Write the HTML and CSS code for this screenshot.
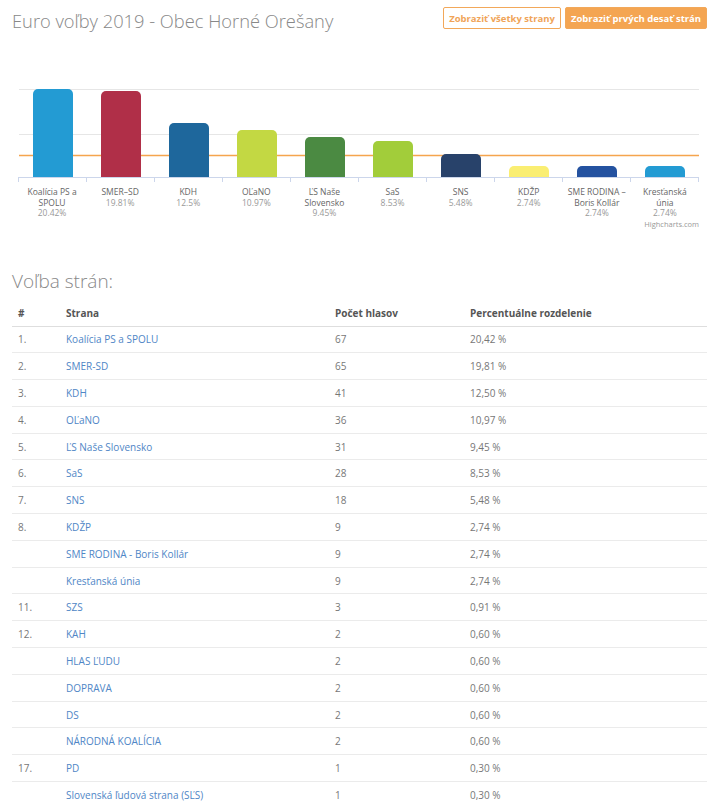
FILE: index.html
```html
<!DOCTYPE html>
<html lang="sk">
<head>
<meta charset="utf-8">
<title>Euro voľby 2019 - Obec Horné Orešany</title>
<link rel="stylesheet" href="styles.css">
</head>
<body>
<div class="page">
  <header class="top">
    <h1 class="title">Euro voľby 2019 - Obec Horné Orešany</h1>
    <div class="actions">
      <button class="btn btn-outline">Zobraziť všetky strany</button>
      <button class="btn btn-fill">Zobraziť prvých desať strán</button>
    </div>
  </header>

  <section class="chart">
    <svg class="plot" width="720" height="104" viewBox="0 80 720 104">
      <g class="grid">
        <line x1="19" y1="89.5" x2="699" y2="89.5"/>
        <line x1="19" y1="134.5" x2="699" y2="134.5"/>
      </g>
      <line class="threshold" x1="19" y1="155.5" x2="699" y2="155.5"/>
      <g class="bars">
        <path fill="#239bd3" d="M33 177V94a5 5 0 0 1 5-5h30a5 5 0 0 1 5 5v83z"/>
        <path fill="#b02f48" d="M101 177V96a5 5 0 0 1 5-5h30a5 5 0 0 1 5 5v81z"/>
        <path fill="#1e679c" d="M169 177V128a5 5 0 0 1 5-5h30a5 5 0 0 1 5 5v49z"/>
        <path fill="#c3d843" d="M237 177V135a5 5 0 0 1 5-5h30a5 5 0 0 1 5 5v42z"/>
        <path fill="#4b8a42" d="M305 177V142a5 5 0 0 1 5-5h30a5 5 0 0 1 5 5v35z"/>
        <path fill="#a2cd3a" d="M373 177V146a5 5 0 0 1 5-5h30a5 5 0 0 1 5 5v31z"/>
        <path fill="#28426a" d="M441 177V159a5 5 0 0 1 5-5h30a5 5 0 0 1 5 5v18z"/>
        <path fill="#faee72" d="M509 177V171a5 5 0 0 1 5-5h30a5 5 0 0 1 5 5v6z"/>
        <path fill="#2452a0" d="M577 177V171a5 5 0 0 1 5-5h30a5 5 0 0 1 5 5v6z"/>
        <path fill="#239bd3" d="M645 177V171a5 5 0 0 1 5-5h30a5 5 0 0 1 5 5v6z"/>
      </g>
      <g class="axis">
        <line x1="18" y1="177.5" x2="699" y2="177.5"/>
        <line x1="18.5" y1="177" x2="18.5" y2="182"/>
        <line x1="86.5" y1="177" x2="86.5" y2="182"/>
        <line x1="154.5" y1="177" x2="154.5" y2="182"/>
        <line x1="222.5" y1="177" x2="222.5" y2="182"/>
        <line x1="290.5" y1="177" x2="290.5" y2="182"/>
        <line x1="358.5" y1="177" x2="358.5" y2="182"/>
        <line x1="426.5" y1="177" x2="426.5" y2="182"/>
        <line x1="494.5" y1="177" x2="494.5" y2="182"/>
        <line x1="562.5" y1="177" x2="562.5" y2="182"/>
        <line x1="630.5" y1="177" x2="630.5" y2="182"/>
        <line x1="698.5" y1="177" x2="698.5" y2="182"/>
      </g>
    </svg>
    <div class="labels">
      <div class="lab"><span class="name">Koalícia PS a<br>SPOLU</span><span class="pct">20.42%</span></div>
      <div class="lab"><span class="name">SMER–SD</span><span class="pct">19.81%</span></div>
      <div class="lab"><span class="name">KDH</span><span class="pct">12.5%</span></div>
      <div class="lab"><span class="name">OĽaNO</span><span class="pct">10.97%</span></div>
      <div class="lab"><span class="name">ĽS Naše<br>Slovensko</span><span class="pct">9.45%</span></div>
      <div class="lab"><span class="name">SaS</span><span class="pct">8.53%</span></div>
      <div class="lab"><span class="name">SNS</span><span class="pct">5.48%</span></div>
      <div class="lab"><span class="name">KDŽP</span><span class="pct">2.74%</span></div>
      <div class="lab"><span class="name">SME RODINA –<br>Boris Kollár</span><span class="pct">2.74%</span></div>
      <div class="lab"><span class="name">Kresťanská<br>únia</span><span class="pct">2.74%</span></div>
    </div>
    <div class="credits">Highcharts.com</div>
  </section>

  <h2 class="section-title">Voľba strán:</h2>
  <table class="results">
    <thead>
      <tr><th class="c-num">#</th><th class="c-name">Strana</th><th class="c-votes">Počet hlasov</th><th class="c-pct">Percentuálne rozdelenie</th></tr>
    </thead>
    <tbody>
      <tr><td>1.</td><td><a href="#">Koalícia PS a SPOLU</a></td><td>67</td><td>20,42 %</td></tr>
      <tr><td>2.</td><td><a href="#">SMER-SD</a></td><td>65</td><td>19,81 %</td></tr>
      <tr><td>3.</td><td><a href="#">KDH</a></td><td>41</td><td>12,50 %</td></tr>
      <tr><td>4.</td><td><a href="#">OĽaNO</a></td><td>36</td><td>10,97 %</td></tr>
      <tr><td>5.</td><td><a href="#">ĽS Naše Slovensko</a></td><td>31</td><td>9,45 %</td></tr>
      <tr><td>6.</td><td><a href="#">SaS</a></td><td>28</td><td>8,53 %</td></tr>
      <tr><td>7.</td><td><a href="#">SNS</a></td><td>18</td><td>5,48 %</td></tr>
      <tr><td>8.</td><td><a href="#">KDŽP</a></td><td>9</td><td>2,74 %</td></tr>
      <tr><td></td><td><a href="#">SME RODINA - Boris Kollár</a></td><td>9</td><td>2,74 %</td></tr>
      <tr><td></td><td><a href="#">Kresťanská únia</a></td><td>9</td><td>2,74 %</td></tr>
      <tr><td>11.</td><td><a href="#">SZS</a></td><td>3</td><td>0,91 %</td></tr>
      <tr><td>12.</td><td><a href="#">KAH</a></td><td>2</td><td>0,60 %</td></tr>
      <tr><td></td><td><a href="#">HLAS ĽUDU</a></td><td>2</td><td>0,60 %</td></tr>
      <tr><td></td><td><a href="#">DOPRAVA</a></td><td>2</td><td>0,60 %</td></tr>
      <tr><td></td><td><a href="#">DS</a></td><td>2</td><td>0,60 %</td></tr>
      <tr><td></td><td><a href="#">NÁRODNÁ KOALÍCIA</a></td><td>2</td><td>0,60 %</td></tr>
      <tr><td>17.</td><td><a href="#">PD</a></td><td>1</td><td>0,30 %</td></tr>
      <tr><td></td><td><a href="#">Slovenská ľudová strana (SĽS)</a></td><td>1</td><td>0,30 %</td></tr>
    </tbody>
  </table>
</div>
</body>
</html>
```

FILE: styles.css
```css
* { box-sizing: border-box; }
html, body { margin: 0; padding: 0; background: #fff; }
body {
  font-family: "Open Sans", "Noto Sans", "Liberation Sans", sans-serif;
  color: #777;
}
.page { width: 720px; }

.top {
  display: flex;
  justify-content: space-between;
  align-items: flex-start;
  padding: 7px 13px 0 12px;
  height: 33px;
}
.title {
  margin: 2px 0 0 0;
  font-size: 18.3px;
  font-weight: 300;
  color: #888;
  line-height: 24px;
}
.actions { display: flex; gap: 4px; }
.btn {
  height: 22px;
  padding: 0;
  font-family: inherit;
  font-size: 9.5px;
  font-weight: 700;
  white-space: nowrap;
  border-radius: 2px;
  border: 1px solid #f2a85a;
  cursor: pointer;
}
.btn-outline { background: #fff; color: #f0a458; width: 118px; }
.btn-fill { background: #f4a552; color: #fff; width: 142px; }

.chart { margin-top: 47px; position: relative; height: 160px; }
.plot { display: block; }
.grid line { stroke: #e6e6e6; stroke-width: 1; }
.threshold { stroke: #f5a54e; stroke-width: 1.5; }
.axis line { stroke: #ccd6eb; stroke-width: 1; }

.labels {
  display: flex;
  padding-left: 18px;
  margin-top: 3px;
}
.lab {
  width: 68.1px;
  display: flex;
  flex-direction: column;
  align-items: center;
  text-align: center;
  font-size: 8.5px;
  line-height: 10.5px;
}
.lab .name { color: #666; }
.lab .pct { color: #999; }
.credits {
  position: absolute;
  right: 21px;
  top: 139px;
  font-size: 7.5px;
  color: #999;
}

.section-title {
  margin: 29px 0 0 12px;
  font-size: 19px;
  font-weight: 300;
  color: #888;
  line-height: 24px;
}

.results {
  margin: 8px 0 0 12px;
  width: 695px;
  table-layout: fixed;
  border-collapse: collapse;
  font-size: 10px;
}
.results th {
  text-align: left;
  font-weight: 700;
  color: #555;
  height: 25px;
  padding: 0 6px;
  border-bottom: 1px solid #dedede;
  vertical-align: middle;
}
.results td {
  height: 26.8px;
  padding: 0 6px;
  border-bottom: 1px solid #ebebeb;
  color: #777;
  vertical-align: middle;
}
.results tbody tr:last-child td { border-bottom: none; }
.c-num { width: 48px; }
.c-name { width: 269px; }
.c-votes { width: 135px; }
.results a { color: #4f86c6; text-decoration: none; }
```
